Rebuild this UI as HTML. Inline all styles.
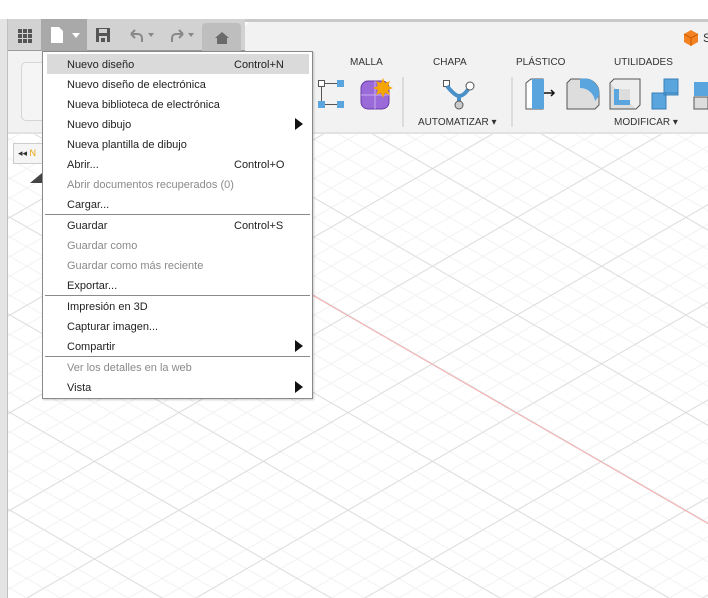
<!DOCTYPE html>
<html><head><meta charset="utf-8"><style>
*{margin:0;padding:0;box-sizing:border-box}
body{width:708px;height:598px;overflow:hidden;background:#fff;font-family:"Liberation Sans",Arial,sans-serif;position:relative}
.abs{position:absolute}
.menu{left:42px;top:51px;width:271px;height:348px;background:#fff;border:1px solid #8a8a8a;box-shadow:1px 1px 2px rgba(0,0,0,.2)}
.it{position:absolute;left:24px;font-size:11px;color:#222;height:20px;line-height:22px;white-space:nowrap}
.dis{color:#8a8a8a}
.sc{position:absolute;left:191px;font-size:11px;color:#222;line-height:22px}
.sep{position:absolute;left:2px;width:265px;height:1px;background:#8a8a8a}
.arr{position:absolute;left:252px;width:0;height:0;border-top:6px solid transparent;border-bottom:6px solid transparent;border-left:8px solid #111}
.lbl{font-size:10px;color:#333;position:absolute}
</style></head><body>
<svg class="abs" style="left:0;top:0" width="708" height="598">
<defs>
<pattern id="mi" patternUnits="userSpaceOnUse" x="10" y="22.2" width="33.8" height="19.52"><path d="M0 0L33.8 19.52M0 19.52L33.8 0" stroke="#f2f2f2" stroke-width="1" fill="none"/></pattern>
<pattern id="ma" patternUnits="userSpaceOnUse" x="10" y="22.2" width="169" height="97.6"><path d="M0 0L169 97.6M0 97.6L169 0" stroke="#d9d9d9" stroke-width="0.8" fill="none"/></pattern>
</defs>
<rect x="8" y="133" width="700" height="465" fill="#fff"/>
<rect x="8" y="133" width="700" height="465" fill="url(#mi)"/>
<rect x="8" y="133" width="700" height="465" fill="url(#ma)"/>
<line x1="100" y1="172.5" x2="708" y2="523.6" stroke="#f8a8a8" stroke-width="0.9"/>
</svg>
<!-- top -->
<div class="abs" style="left:0;top:19px;width:708px;height:3px;background:#c9c9c9"></div>
<div class="abs" style="left:0;top:19px;width:245px;height:32px;background:#d2d2d2"></div>
<div class="abs" style="left:245px;top:22px;width:463px;height:111px;background:#f2f2f2;border-top-left-radius:6px"></div>
<div class="abs" style="left:0;top:51px;width:245px;height:82px;background:#f2f2f2"></div>
<div class="abs" style="left:0;top:50px;width:245px;height:1px;background:#9a9a9a"></div>
<div class="abs" style="left:0;top:132px;width:708px;height:2px;background:#e2e2e2"></div>
<div class="abs" style="left:0;top:19px;width:8px;height:579px;background:#e4e4e4;border-right:1px solid #c0c0c0"></div>
<!-- toolbar buttons -->
<div class="abs" style="left:18px;top:29px;width:14px;height:14px;background:
linear-gradient(#555,#555) 0 0/4px 4px no-repeat,linear-gradient(#555,#555) 5px 0/4px 4px no-repeat,linear-gradient(#555,#555) 10px 0/4px 4px no-repeat,
linear-gradient(#555,#555) 0 5px/4px 4px no-repeat,linear-gradient(#555,#555) 5px 5px/4px 4px no-repeat,linear-gradient(#555,#555) 10px 5px/4px 4px no-repeat,
linear-gradient(#555,#555) 0 10px/4px 4px no-repeat,linear-gradient(#555,#555) 5px 10px/4px 4px no-repeat,linear-gradient(#555,#555) 10px 10px/4px 4px no-repeat"></div>
<div class="abs" style="left:41px;top:19px;width:46px;height:32px;background:#a9a9a9"></div>
<svg class="abs" style="left:50px;top:26px" width="34" height="18"><path d="M1 1h8l4 4v12H1z" fill="#fff"/><path d="M22 7h8l-4 5z" fill="#fff"/></svg>
<svg class="abs" style="left:95px;top:27px" width="16" height="16"><path d="M1 1h14v14H1z" fill="#555"/><rect x="4" y="2" width="8" height="4" fill="#d2d2d2"/><rect x="4" y="9" width="8" height="6" fill="#d2d2d2"/><rect x="6" y="11" width="4" height="4" fill="#555"/></svg>
<svg class="abs" style="left:127px;top:27px" width="70" height="16"><path d="M4 7h7a4 4 0 0 1 4 4v4M4 7l4-4M4 7l4 4" stroke="#888" stroke-width="2" fill="none"/><path d="M21 6h6l-3 4z" fill="#888"/><path d="M56 7h-7a4 4 0 0 0-4 4v4M56 7l-4-4M56 7l-4 4" stroke="#888" stroke-width="2" fill="none"/><path d="M61 6h6l-3 4z" fill="#888"/></svg>
<div class="abs" style="left:202px;top:23px;width:39px;height:28px;background:#bebebe;border-radius:4px 4px 0 0"></div>
<svg class="abs" style="left:214px;top:31px" width="16" height="14"><path d="M8 1l7 6h-2v6H3V7H1z" fill="#6a6a6a"/></svg>
<!-- ribbon -->
<div class="abs" style="left:21px;top:62px;width:40px;height:59px;border:1px solid #d5d5d5;border-radius:5px;background:#f5f5f5"></div>
<div class="lbl" style="left:350px;top:57px">MALLA</div>
<div class="lbl" style="left:433px;top:57px">CHAPA</div>
<div class="lbl" style="left:516px;top:57px">PLÁSTICO</div>
<div class="lbl" style="left:614px;top:57px">UTILIDADES</div>
<div class="lbl" style="left:418px;top:117px">AUTOMATIZAR ▾</div>
<div class="lbl" style="left:614px;top:117px">MODIFICAR ▾</div>
<div class="lbl" style="left:703px;top:31px;font-size:12px">S</div>
<svg class="abs" style="left:683px;top:29px" width="16" height="17"><path d="M8 1l7 4v8l-7 4-7-4V5z" fill="#f58220"/><path d="M8 9l7-4M8 9L1 5M8 9v8" stroke="#c55a00" stroke-width="1" fill="none"/></svg>
<div class="abs" style="left:402px;top:77px;width:2px;height:50px;background:#dcdcdc"></div>
<div class="abs" style="left:511px;top:77px;width:2px;height:50px;background:#dcdcdc"></div>
<svg class="abs" style="left:316px;top:78px" width="80" height="34"><rect x="2.5" y="2.5" width="6" height="6" fill="#fff" stroke="#555"/><rect x="21" y="2" width="7" height="7" fill="#5aa5dd"/><rect x="2" y="23" width="7" height="7" fill="#5aa5dd"/><rect x="21" y="23" width="7" height="7" fill="#5aa5dd"/><path d="M9 5.5h12M5.5 9v14M9 26.5h12" stroke="#555"/><rect x="45" y="3" width="28" height="28" rx="7" fill="#9a6ad8" stroke="#6a3aa8"/><path d="M59 3v28M45 17h28" stroke="#c9aff0"/><path d="M67 0l2 5 5-2-2 5 5 2-5 2 2 5-5-2-2 5-2-5-5 2 2-5-5-2 5-2-2-5 5 2z" fill="#f5a500"/></svg>
<svg class="abs" style="left:441px;top:78px" width="36" height="32"><rect x="2.5" y="2.5" width="6" height="6" fill="#fff" stroke="#555"/><path d="M6 8q8 10 12 10q5 0 10-8M18 18v8" stroke="#4a90c8" stroke-width="4" fill="none"/><circle cx="18" cy="27" r="4" fill="#ccc" stroke="#555"/><circle cx="29" cy="8" r="4" fill="#fff" stroke="#555"/></svg>
<svg class="abs" style="left:524px;top:78px" width="184" height="34"><path d="M2 5l5-4h12v30H2z" fill="#fff" stroke="#555"/><rect x="8" y="1" width="12" height="30" fill="#5aa5dd"/><path d="M20 15h10M27 12l3 3-3 3" stroke="#111" stroke-width="1.5" fill="none"/><path d="M43 5l4-4h14a14 14 0 0 1 14 14v12l-4 4H43z" fill="#ddd" stroke="#555"/><path d="M56 1a15 15 0 0 1 19 17l-4 5a15 15 0 0 0-15-13z" fill="#5aa5dd"/><rect x="86" y="5" width="26" height="26" fill="#ddd" stroke="#555"/><path d="M86 5l4-4h26v26l-4 4" fill="#eee" stroke="#555"/><rect x="90" y="11" width="16" height="16" fill="#5aa5dd"/><rect x="95" y="11" width="11" height="11" fill="#ddd"/><path d="M128 15h14v16h-14z M140 1h14v16h-14z M140 15h14" fill="#5aa5dd" stroke="#3a80b8"/><rect x="170" y="4" width="14" height="14" fill="#5aa5dd"/><rect x="170" y="19" width="14" height="12" fill="#ddd" stroke="#555"/></svg>
<!-- browser -->
<div class="abs" style="left:13px;top:143px;width:30px;height:21px;border:1px solid #ccc;background:#f5f5f5;font-size:9px;line-height:19px;padding-left:4px;color:#333">◂◂ <span style="color:#e8a000">N</span></div>
<svg class="abs" style="left:29px;top:172px" width="14" height="12"><path d="M1 11L13 1v10z" fill="#444"/></svg>
<!-- menu -->
<div class="abs menu">
<div class="abs" style="left:4px;top:2px;width:262px;height:20px;background:#dadada"></div>
<div class="it" style="top:2px">Nuevo diseño</div><div class="sc" style="top:2px">Control+N</div>
<div class="it" style="top:22px">Nuevo diseño de electrónica</div>
<div class="it" style="top:42px">Nueva biblioteca de electrónica</div>
<div class="it" style="top:62px">Nuevo dibujo</div><div class="arr" style="top:66px"></div>
<div class="it" style="top:82px">Nueva plantilla de dibujo</div>
<div class="it" style="top:102px">Abrir...</div><div class="sc" style="top:102px">Control+O</div>
<div class="it dis" style="top:122px">Abrir documentos recuperados (0)</div>
<div class="it" style="top:142px">Cargar...</div>
<div class="sep" style="top:162px"></div>
<div class="it" style="top:163px">Guardar</div><div class="sc" style="top:163px">Control+S</div>
<div class="it dis" style="top:183px">Guardar como</div>
<div class="it dis" style="top:203px">Guardar como más reciente</div>
<div class="it" style="top:223px">Exportar...</div>
<div class="sep" style="top:243px"></div>
<div class="it" style="top:244px">Impresión en 3D</div>
<div class="it" style="top:264px">Capturar imagen...</div>
<div class="it" style="top:284px">Compartir</div><div class="arr" style="top:288px"></div>
<div class="sep" style="top:304px"></div>
<div class="it dis" style="top:305px">Ver los detalles en la web</div>
<div class="it" style="top:325px">Vista</div><div class="arr" style="top:329px"></div>
</div>
</body></html>
